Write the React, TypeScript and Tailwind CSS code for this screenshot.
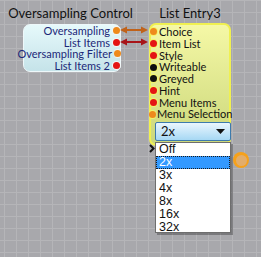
import React from 'react';

const leftRows = [
  { label: 'Oversampling', color: 'bg-[#ee8a1c]' },
  { label: 'List Items', color: 'bg-[#e41414]' },
  { label: 'Oversampling Filter', color: 'bg-[#ee8a1c]' },
  { label: 'List Items 2', color: 'bg-[#e41414]' },
];

const rightRows = [
  { label: 'Choice', color: 'bg-[#ee8a1c]' },
  { label: 'Item List', color: 'bg-[#e41414]' },
  { label: 'Style', color: 'bg-[#e41414]' },
  { label: 'Writeable', color: 'bg-[#101010]' },
  { label: 'Greyed', color: 'bg-[#101010]' },
  { label: 'Hint', color: 'bg-[#e41414]' },
  { label: 'Menu Items', color: 'bg-[#e41414]' },
  { label: 'Menu Selection', color: 'bg-[#ee8a1c]' },
];

const options = ['Off', '2x', '3x', '4x', '8x', '16x', '32x'];

function Arrow({ color }: { color: string }) {
  return (
    <svg width="28" height="8" viewBox="0 0 28 8">
      <line x1="3" y1="4" x2="25" y2="4" stroke={color} strokeWidth="2" />
      <polygon points="0,4 7,0.5 7,7.5" fill={color} />
      <polygon points="28,4 21,0.5 21,7.5" fill={color} />
    </svg>
  );
}

export default function App() {
  return (
    <div
      className="relative w-[261px] h-[257px] overflow-hidden bg-[#a8a8ac] bg-[linear-gradient(to_right,#b5b5b8_1px,transparent_1px),linear-gradient(to_bottom,#b5b5b8_1px,transparent_1px)] bg-[size:12px_12px] bg-[position:4px_0px]"
      style={{ fontFamily: 'Lato, "Open Sans", sans-serif' }}
    >
      {/* left node */}
      <div className="absolute left-0 top-[5px] w-[141px] text-center text-[13px] leading-[17px] text-[#111] whitespace-nowrap">
        Oversampling Control
      </div>
      <div className="absolute left-[23px] top-[24px] w-[98px] h-[48px] rounded-[7px] border border-[#eef8fa] bg-gradient-to-b from-[#e6f9fb] to-[#c5e3e9] flex flex-col">
        {leftRows.map((r) => (
          <div key={r.label} className="h-[11.5px] flex items-center justify-end gap-[2px]">
            <span className="text-[11px] leading-[11.5px] text-[#1c2878] whitespace-nowrap">{r.label}</span>
            <span className="w-[9px] h-[9px] rounded-full bg-[#f2f6f7] flex items-center justify-center mr-[-1px]">
              <span className={`w-[7px] h-[7px] rounded-full ${r.color}`} />
            </span>
          </div>
        ))}
      </div>

      {/* connections */}
      <div className="absolute left-[120px] top-[26px] flex flex-col gap-[4px]">
        <Arrow color="#c0621a" />
        <Arrow color="#a81418" />
      </div>

      {/* right node */}
      <div className="absolute left-[148px] top-[5px] w-[84px] text-center text-[13px] leading-[17px] text-[#111] whitespace-nowrap">
        List Entry3
      </div>
      <div className="absolute left-[149px] top-[23px] w-[82px] h-[123px] rounded-[7px] border-2 border-[#f0f050] bg-gradient-to-b from-[#f5f8a6] to-[#cbd77a] flex flex-col pt-[1px]">
        {rightRows.map((r) => (
          <div key={r.label} className="h-[11.75px] flex items-center gap-[1px] ml-[-2px]">
            <span className="w-[9px] h-[9px] rounded-full bg-[#f4f46a] flex items-center justify-center">
              <span className={`w-[7px] h-[7px] rounded-full ${r.color}`} />
            </span>
            <span className="text-[11px] leading-[11.75px] text-[#111] whitespace-nowrap">{r.label}</span>
          </div>
        ))}
      </div>

      {/* combo box */}
      <div className="absolute left-[155px] top-[122px] w-[76px] h-[19px] rounded-[2px] border border-[#3d7bad] bg-gradient-to-b from-[#eaf6fd] to-[#a6d8f4] flex items-center justify-between px-[5px]">
        <span className="text-[13px] leading-[15px] text-[#111]">2x</span>
        <svg width="9" height="5" viewBox="0 0 9 5">
          <polygon points="0,0 9,0 4.5,5" fill="#111" />
        </svg>
      </div>

      {/* dropdown list */}
      <div
        className="absolute left-[155px] top-[142px] w-[76px] h-[91px] bg-white border border-[#6e6e6e] shadow-[2px_2px_0_rgba(0,0,0,0.28)] flex flex-col"
        style={{ fontFamily: '"Liberation Sans", Arial, sans-serif' }}
      >
        {options.map((o) => (
          <div
            key={o}
            className={
              o === '2x'
                ? 'h-[13px] shrink-0 flex items-center pl-[3px] text-[12.5px] leading-[13px] bg-[#3399ff] text-white outline-1 outline-dotted outline-[#1a1a1a] -outline-offset-1'
                : 'h-[13px] shrink-0 flex items-center pl-[3px] text-[12.5px] leading-[13px] text-[#111]'
            }
          >
            {o}
          </div>
        ))}
      </div>
      <svg className="absolute left-[149px] top-[144px]" width="6" height="9" viewBox="0 0 6 9">
        <polyline points="1,1 4.5,4.5 1,8" fill="none" stroke="#111" strokeWidth="2" />
      </svg>

      {/* orange pin */}
      <div className="absolute left-[233px] top-[152px] w-[16px] h-[16px] rounded-full bg-[#f6a11a] flex items-center justify-center">
        <div className="w-[11px] h-[11px] rounded-full bg-[#e3ad6a]" />
      </div>
    </div>
  );
}
